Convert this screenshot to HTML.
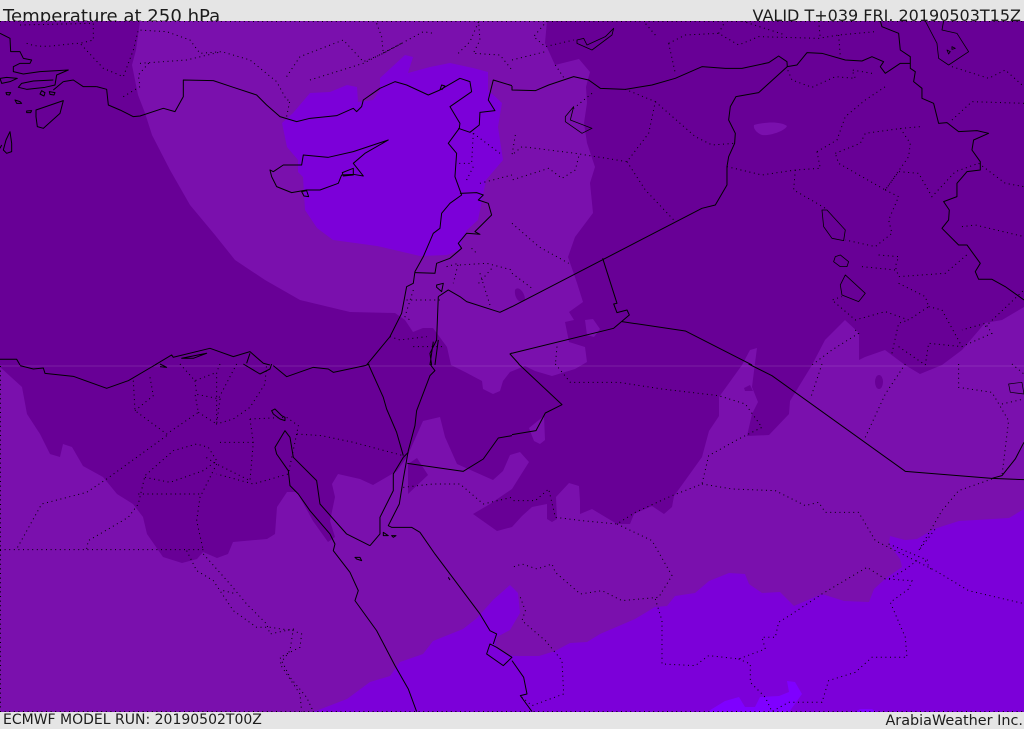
<!DOCTYPE html>
<html><head><meta charset="utf-8"><title>Temperature at 250 hPa</title>
<style>
html,body{margin:0;padding:0;background:#e5e5e5}
#w{position:relative;width:1024px;height:729px;overflow:hidden;background:#e5e5e5;font-family:"DejaVu Sans",sans-serif;color:#1c1c1c}
.t{position:absolute;white-space:nowrap}
svg{position:absolute;left:0;top:21px}
path{vector-effect:non-scaling-stroke}
.c path{fill:none;stroke:#000;stroke-width:1;stroke-linejoin:round}
.d path{fill:none;stroke:#000;stroke-width:1;stroke-dasharray:1 3.6}
</style></head><body><div id="w">
<div class="t" style="left:3px;top:6px;font-size:18.1px;line-height:21px">Temperature at 250 hPa</div>
<div class="t" style="right:3px;top:5px;font-size:16px;line-height:21px">VALID T+039 FRI, 20190503T15Z</div>
<div class="t" style="left:3px;top:712px;font-size:14px;line-height:17px">ECMWF MODEL RUN: 20190502T00Z</div>
<div class="t" style="right:1px;top:713px;font-size:14.4px;line-height:17px">ArabiaWeather Inc.</div>
<svg width="1024" height="691" viewBox="0 21 1024 691">
<rect x="0" y="21" width="1024" height="691" fill="#680096"/>
<!-- mid north -->
<path fill="#7a10ad" d="M140 21 136 50 132 65 138 95 145 113 152 135 170 170 190 205 215 235 235 260 265 280 300 300 350 312 395 313 405 320 413 332 423 328 433 328 447 347 451 365 465 372 482 381 483 389 493 394 500 391 503 381 510 372 525 366 535 371 552 376 575 369 587 362 585 347 569 342 565 322 574 320 569 312 583 302 577 283 568 257 575 237 593 213 590 183 595 167 587 143 584 123 587 103 586 87 590 72 579 59 555 65 545 43 547 21Z"/>
<path fill="#680096" d="M515 290C518 285 525 292 525 300 520 305 514 298 515 290Z"/>
<!-- mid south -->
<path fill="#7a10ad" d="M0 367 22 387 27 414 40 434 50 454 60 457 63 444 72 447 83 466 103 477 117 494 133 504 143 517 147 534 163 557 182 563 197 559 203 552 217 558 228 554 233 542 267 539 275 534 277 507 287 492 297 492 313 521 328 542 335 537 330 521 335 497 332 484 338 474 360 479 373 485 397 471 407 457 423 421 440 417 445 437 457 464 493 480 503 471 510 455 520 452 529 462 517 481 512 489 490 504 473 514 497 531 512 527 522 516 532 507 547 504 547 519 552 522 557 519 556 497 569 483 579 486 580 501 580 514 592 509 617 524 630 524 634 514 652 506 664 514 672 507 674 496 692 471 702 457 709 431 719 416 719 397 742 365 750 350 757 348 755 363 752 387 758 402 752 414 747 436 769 435 789 414 790 401 812 365 825 340 845 320 859 333 859 360 865 357 885 350 905 365 920 374 942 365 962 350 985 323 1002 320 1024 307V712H0Z"/>
<path fill="#680096" d="M408 464 417 458 428 475 408 494Z"/>
<ellipse cx="879" cy="382" rx="4" ry="7" fill="#680096"/>
<path fill="#680096" d="M744 388 750 385 753 391 745 391Z"/>
<path fill="#7a10ad" d="M754 125C765 122 780 121 787 126 785 131 770 136 762 135 757 133 753 129 754 125Z"/>
<path fill="#7a10ad" d="M585 320 593 319 600 329 594 337 587 335Z"/>
<path fill="#7a10ad" d="M529 428 544 416 545 440 540 444 534 441Z"/>
<!-- bright north -->
<path fill="#7c00d9" d="M282 123 287 147 298 160 298 172 303 177 305 210 317 228 333 240 377 246 420 256 447 255 460 250 462 240 467 230 478 220 482 200 486 180 503 160 498 127 502 103 488 90 488 72 473 68 450 63 430 67 408 73 413 57 405 55 380 78 380 90 373 100 358 102 357 87 347 85 330 92 310 93 293 113Z"/>
<!-- bright south -->
<path fill="#7c00d9" d="M313 712 347 699 370 682 390 676 400 662 423 654 433 641 463 629 477 618 493 600 510 585 518 593 520 613 510 630 497 637 495 645 503 652 513 656 539 656 555 651 570 643 587 642 600 634 635 619 655 607 667 606 675 596 695 593 709 581 729 573 745 574 749 584 762 593 780 592 794 606 822 594 844 601 869 602 874 589 885 579 902 567 900 559 889 544 890 536 905 540 917 539 934 529 959 521 1009 518 1024 509V712Z"/>
<path fill="#7f00ff" d="M707 712 725 701 739 697 745 707 755 707 760 697 779 696 789 692 787 681 795 682 802 694 789 712ZM855 712 860 709 872 709 876 712Z"/>
<path d="M0 366H1024" stroke="#fff" stroke-opacity=".12" stroke-width="1" fill="none"/>

<!-- dotted borders -->
<g class="d">
<path d="M0 21.5H1024M0 711.5H1024M.5 366V712"/>
<g transform="scale(.3333)">
<path d="M80 130C130 150 190 130 240 130L310 205 370 230 400 150 415 90 500 95 570 120 600 160 665 155 750 180 830 245 860 300 870 300 860 350M60 75 280 70 280 120 240 130M420 190 560 180 665 155M370 290 420 260 415 225 450 185M860 230 900 170 1030 120 1090 185 1140 165 1205 130 1270 95 1300 100M930 240 1090 190 1205 130M1130 70 1145 110 1150 160 1205 130M1375 160 1410 125 1436 65 1440 120 1420 160 1500 165 1536 210M1420 400 1415 490 1370 490M1500 460 1420 400M1400 540 1420 500M1440 550 1536 525M1380 795 1460 790 1536 810M1440 820 1470 915M1436 850 1480 800M1340 800 1375 790 1360 850M1220 900 1250 900 1330 900M1240 870 1215 950 1230 960M1415 745 1430 760M1170 1010 1200 1020 1280 1010M1240 1040 1330 1040"/>
</g>
<g transform="translate(512,0) scale(.3333)">
<path d="M105 63 65 110 100 140 185 120M0 180 100 155M130 195 160 240M240 280 185 325M10 405 0 465 30 440 190 460 345 485 410 400 430 305 340 268M430 305 550 410 600 435 668 430M200 470 190 510 150 535 110 505 0 540M345 485 400 570 490 665M645 500 750 525 850 510 925 505M850 510 845 570 915 610 940 625M915 455 975 420 1000 350 1060 300 1120 260M915 455 925 505M970 460 1045 430 1060 400 1170 385 1225 380M1165 385 1195 430 1190 470 1120 570 1050 530 980 490 970 460M1120 570 1160 590 1130 660 1140 700 1090 740 1000 720M1120 570 1160 515 1220 520 1260 590 1330 515 1400 490M1400 490 1480 550 1536 560M1100 765 1160 770 1150 800 1160 830 1300 820 1370 760M1050 800 1150 810M1160 850 1240 890 1250 920 1190 960 1120 935 1030 960 960 900 990 890M1250 920 1290 930 1350 1040M1030 990 1040 1000 960 1050 900 1095M1140 1060 1160 970 1190 960M1160 1040 1240 1095M1240 1095 1250 1030 1350 1040 1440 1000 1420 970 1350 990M1420 980 1536 870M1320 360 1380 305 1536 310M1350 680 1390 675 1536 710M1320 200 1430 235 1480 210 1536 260M1080 220 1020 210 1030 235 970 230 900 262 840 240 825 205M470 130 520 105 620 100 680 135 740 110 920 115 980 105 1090 95M620 100 640 63M690 63 820 105M920 63 925 115M980 105 985 170M470 130 490 220M430 105 400 70M0 670 80 740 170 790M0 820 60 865M135 1040 130 1095"/>
</g>
<g transform="translate(0,364) scale(.3333)">
<path d="M400 50 405 140 500 210 595 145 585 90 660 105 650 180 595 145M450 40 460 95 405 140M540 0 585 50 650 25 650 180 700 165 750 130 795 60 800 0M585 50 590 90M660 0 650 25M710 0 655 105M750 165 860 160 895 185 890 210 965 215 1060 235 1210 275M750 165 760 235 750 350 650 300 610 275M660 235 760 235M890 210 865 330 760 360 650 330M650 300 600 400 590 470 610 560M435 340 510 355 610 320 650 290 625 250 590 240 520 260 435 335 415 420 385 460 265 530 260 555M415 390 600 390M500 215 320 345 260 385 125 420 50 555M0 557H610M560 560 590 620 640 650 700 740 770 790 810 790 880 800 905 810 900 850 840 880 870 940 920 1000 940 1043M610 570 690 660 740 720 800 780 810 810 880 795 870 860 840 900 870 945 900 990 905 1043M670 680 710 690"/>
<path d="M1210 370 1300 360 1380 360 1450 420 1536 400"/>
</g>
<g transform="translate(512,364) scale(.3333)">
<path d="M130 0 175 55 320 55 450 75 620 95 700 120 750 190 680 225 590 275 570 360 480 395 370 445 315 480 210 470 130 460 110 375 70 410 0 410M570 360 660 375 790 380 880 425 920 415 940 445 1040 445 1090 530 1190 580 1270 620 1370 680 1540 720M315 480 420 530 480 635 440 700 330 710 270 680 205 690 130 625 120 600 75 615 30 600 0 610M430 705 450 770 450 900 550 905 590 875 680 885 760 855 750 820 790 820 800 775 840 750 930 690 1065 610 1120 645 1200 650 1190 675 1135 715 1180 820 1185 880 1080 880 1030 925 950 950 930 1015 830 1015 780 1043M680 885 715 900 715 955 760 1000 780 1043M25 700 40 740 30 770 100 830 150 890 155 990 60 1025 30 1000M930 0 895 105M1180 0 1120 90 1060 220M1340 0 1340 70 1440 85 1490 170 1470 335M1470 120 1536 105M1440 345 1340 380 1290 440 1220 560 1270 495M1130 540 1250 590M1215 590 1175 620 1130 645M1500 0 1536 30M1240 590 1260 620"/>
</g>
</g>

<!-- solid coastlines and borders -->
<g class="c">
<path d="M512 353 510 354 519 364"/>
<g transform="scale(.3333)">
<!-- Aegean -->
<path d="M0 100 30 115 32 155 60 155 70 175 95 180 90 190 60 190 40 200 40 215 70 222 120 215 205 210 170 225 165 255 135 262 80 268 55 262 65 250 100 243 160 240M190 245 220 240 250 260 290 260M0 235 20 232 52 235 30 245 5 250ZM18 278 32 278 28 285 20 284ZM125 272 135 278 132 288 120 282ZM148 275 165 278 162 285 150 283ZM45 300 60 305 65 310 50 310ZM80 333 95 332 92 338 80 338ZM108 330 190 302 180 340 130 385 112 380 108 350ZM10 450 18 420 30 395 35 430 35 455 20 460ZM0 445 5 435"/>
<!-- Turkey coast to Syria -->
<path d="M160 270 190 245M290 260 320 268 325 315 360 330 400 350 420 348 490 325 525 335 550 290 550 240 640 242 700 262 770 285 800 315 840 350 890 365 930 355 1010 347 1060 325 1070 335 1085 320 1090 300 1140 265 1185 245 1220 255 1285 285 1320 270 1380 235 1410 245 1415 275 1350 320 1380 370 1378 385 1345 430 1370 460 1365 530 1385 585 1350 610 1325 640 1320 685 1300 700 1270 770 1245 815 1240 850 1220 860 1205 940 1170 1010 1100 1095"/>
<path d="M1320 270 1325 255 1335 258 1325 270"/>
<!-- Syria borders -->
<path d="M1375 385 1410 397 1438 375 1440 337 1485 332 1465 300 1480 240 1536 257M1380 580 1430 578 1450 585 1435 600 1465 610 1475 645 1425 695 1440 703 1400 700 1375 730 1385 745 1350 775 1310 790 1305 820 1245 818"/>
<!-- Cyprus -->
<path d="M810 510 820 515 850 495 905 495 910 465 985 472 1060 455 1165 420 1095 460 1060 490 1090 528 1060 523 1025 525 1015 550 960 570 920 570 875 578 830 560 815 530ZM1027 518 1060 505 1060 525 1030 528ZM905 575 920 572 926 590 912 588Z"/>
<!-- Jordan valley -->
<path d="M1310 855 1330 850 1325 875 1310 862ZM1315 890 1345 870 1380 890 1400 905 1500 937 1536 920M1315 890 1310 1020 1290 1060 1295 1095M1315 1020 1305 1095M1300 1025 1290 1095"/>
<!-- Egypt N coast -->
<path d="M0 1078 50 1078 60 1095M465 1095 515 1065 520 1072 630 1045 700 1070 750 1055 790 1090 810 1095M545 1075 620 1060 580 1075ZM750 1060 740 1090"/>
</g>
<g transform="translate(512,0) scale(.3333)">
<path d="M0 258 0 270 70 272 110 255 185 230 230 240 265 265 340 268 420 255 490 235 570 200 640 205 690 205 770 188 800 168 825 185 826 200 855 195 885 158 930 160 1000 180 1050 183 1080 170 1115 185 1105 200 1120 220 1165 190 1195 190M1105 63 1110 80 1160 100 1165 150 1195 170 1195 205 1210 215 1205 245 1230 265 1230 295 1265 310 1280 370 1305 368 1340 395 1395 392 1430 400 1385 420 1380 450 1405 485 1405 510 1365 515 1335 550 1335 590 1295 605 1312 630 1310 660 1290 685 1340 735 1365 735 1405 790 1390 815 1400 838 1440 838 1480 860 1536 900"/>
<path d="M826 200 740 278 672 290 655 320 650 360 670 400 668 430 650 470 645 500 645 555 610 615 570 625 0 920M272 775 315 910 305 912 315 938 345 930 352 945 305 985 0 1060M330 965 520 993 720 1095"/>
<path stroke-width=".7" d="M195 120 215 115 225 135 280 110 305 85 300 105 240 150 195 130ZM160 350 185 320 175 360 240 385 210 400 160 365ZM1240 63 1275 130 1280 175 1310 195 1370 155 1335 100 1290 90 1295 63M1305 150 1315 155 1310 162ZM1320 140 1330 145 1320 148ZM930 630 945 630 1000 690 995 722 960 715 935 680ZM970 770 985 765 1010 785 1005 800 985 800 965 785ZM1000 825 985 855 990 885 1040 905 1060 880Z" style="stroke-width:.8"/>
</g>
<g transform="translate(0,364) scale(.3333)">
<path d="M60 5 100 15 130 12 135 28 220 37 320 73 385 50 470 0M480 0 500 10 480 8M730 0 780 30 810 15 815 0M820 5 860 38 940 10 985 15 1000 25 1095 5 1108 0M1105 0 1150 100 1160 135 1190 205 1210 275"/>
<path d="M1290 0 1305 20 1290 35 1250 140 1245 185 1225 260 1210 345 1198 420 1165 485 1175 490 1235 490 1260 505 1305 570 1350 630 1440 750 1470 800 1490 810 1480 840"/>
<path d="M1470 840 1460 870 1510 905 1536 880 1490 850ZM1345 640 1350 648M1150 505 1165 515 1150 515ZM1175 515 1188 515 1180 520ZM1065 580 1080 580 1085 590 1070 585ZM815 140 825 135 845 155 855 160 855 170 840 165 820 150Z"/>
<path d="M1110 545 1090 535 1040 510 960 420 950 350 880 280 870 220 855 200 825 250 830 270 865 320 870 365 895 390 930 440 990 510 1005 540 1000 560 1050 625 1075 680 1065 710 1130 800 1185 905 1225 975 1250 1043M1110 545 1140 510 1140 460 1180 380 1180 330 1210 280 1225 265"/>
<path d="M1222 298 1390 322 1450 285 1495 222 1536 215"/>
</g>
<g transform="translate(512,364) scale(.3333)">
<path d="M0 212 72 200 100 147 150 122 20 0M710 0 780 35 1180 322 1440 343 1536 347M1440 343 1470 335 1510 285 1536 235M0 890 35 940 45 990 25 995 60 1043"/>
<path style="stroke-width:.7" d="M1490 60 1530 55 1536 90 1495 85Z"/>
</g>
</g>
</svg>
</div></body></html>
